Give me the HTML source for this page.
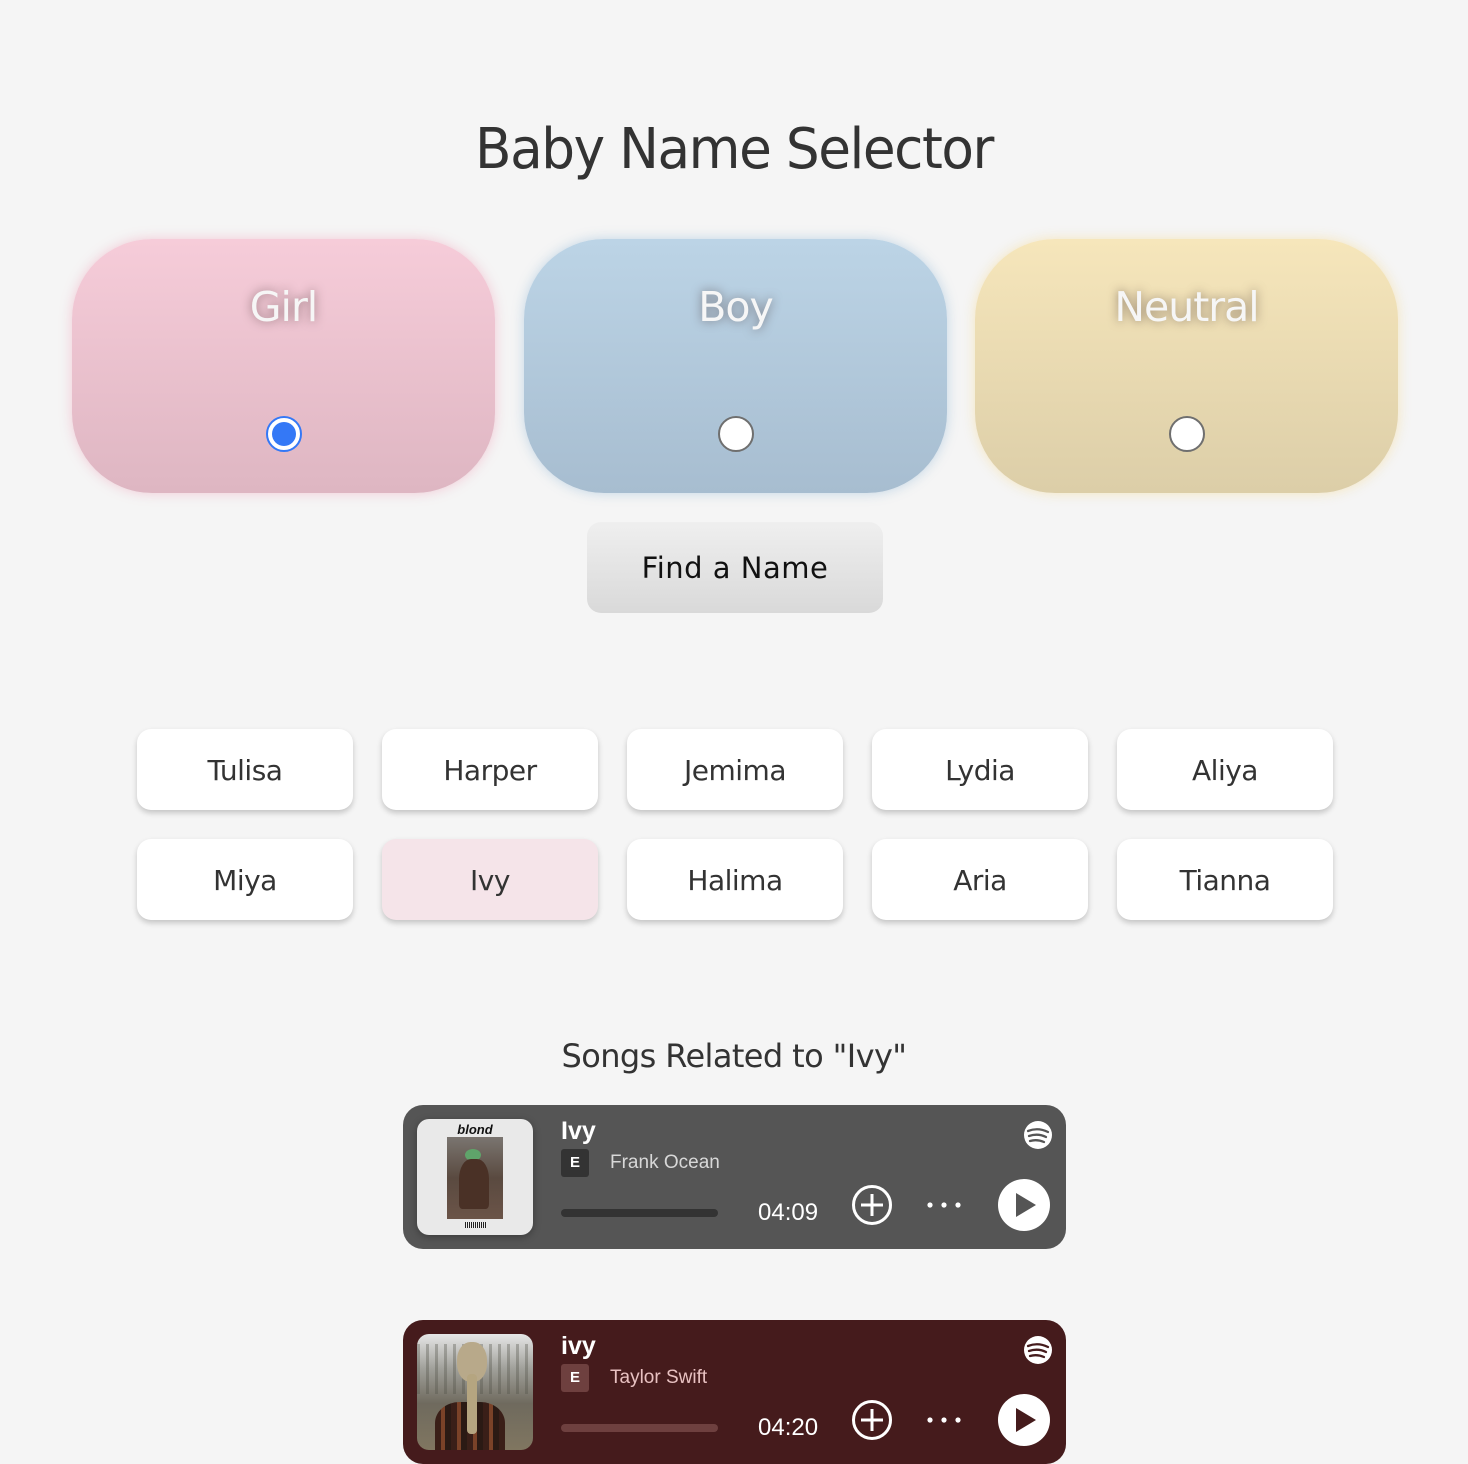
<!DOCTYPE html>
<html><head><meta charset="utf-8"><style>
*{margin:0;padding:0;box-sizing:border-box}
body{width:1468px;height:1450px;background:#f5f5f5;font-family:"DejaVu Sans","Liberation Sans",sans-serif;position:relative;overflow:hidden;color:#333}
.abs{position:absolute}
h1{position:absolute;left:0;width:1468px;top:117px;text-align:center;font-size:56px;font-weight:normal;color:#333;letter-spacing:-1.5px;font-family:"DejaVu Sans",sans-serif;transform:scaleX(.95)}
.card{position:absolute;top:239px;width:423px;height:254px;border-radius:80px}
.card .lbl{position:absolute;top:44px;width:100%;text-align:center;font-size:41px;color:#f6f6f6;text-shadow:0 0 10px rgba(60,40,40,.55);letter-spacing:-1px}
.radio{position:absolute;left:194px;top:177px;width:36px;height:36px;border-radius:50%;background:#fff;border:2px solid #6f6f6f}
.find{position:absolute;left:587px;top:522px;width:296px;height:91px;border-radius:14px;background:linear-gradient(#efefef,#d9d9d9);text-align:center;line-height:93px;font-size:29px;color:#111;letter-spacing:0.5px}
.nm{position:absolute;width:216px;height:81px;border-radius:14px;background:#fff;box-shadow:0 3px 6px rgba(0,0,0,.2);text-align:center;line-height:83px;font-size:28px;color:#333;letter-spacing:-.5px}
.h2{position:absolute;left:0;width:1468px;top:1037px;text-align:center;font-size:32px;color:#333;letter-spacing:-.6px}
.song{position:absolute;left:403px;width:663px;height:144px;border-radius:20px}
.art{position:absolute;left:14px;top:14px;width:116px;height:116px;border-radius:12px;overflow:hidden}
.t{position:absolute;left:158px;top:12px;font-size:25px;color:#fff;font-family:"Liberation Sans",sans-serif;font-weight:bold}
.e{position:absolute;left:158px;top:44px;width:28px;height:28px;border-radius:3px;color:#fff;font-size:15px;font-weight:bold;text-align:center;line-height:28px;font-family:"Liberation Sans",sans-serif}
.ar{position:absolute;left:207px;top:44px;line-height:28px;font-size:19px;font-family:"Liberation Sans",sans-serif}
.bar{position:absolute;left:158px;top:104px;width:157px;height:8px;border-radius:4px}
.tm{position:absolute;left:355px;top:94px;font-size:24px;color:#fff;font-family:"Liberation Sans",sans-serif}
</style></head><body>
<h1>Baby Name Selector</h1>
<div class="card" style="left:72px;background:linear-gradient(#f6ccd9,#deb6c2);box-shadow:0 0 12px rgba(240,190,205,.8)"><div class="lbl">Girl</div><div class="radio" style="border:2px solid #3478f6;background:#fff"><div style="position:absolute;left:4px;top:4px;width:24px;height:24px;border-radius:50%;background:#3478f6"></div></div></div>
<div class="card" style="left:524px;background:linear-gradient(#bcd4e6,#a7bdd0);box-shadow:0 0 12px rgba(180,205,225,.8)"><div class="lbl">Boy</div><div class="radio"></div></div>
<div class="card" style="left:975px;background:linear-gradient(#f6e6bb,#dccea8);box-shadow:0 0 12px rgba(245,225,175,.8)"><div class="lbl">Neutral</div><div class="radio"></div></div>
<div class="find">Find a Name</div>

<div class="nm" style="left:137px;top:729px">Tulisa</div>
<div class="nm" style="left:382px;top:729px">Harper</div>
<div class="nm" style="left:627px;top:729px">Jemima</div>
<div class="nm" style="left:872px;top:729px">Lydia</div>
<div class="nm" style="left:1117px;top:729px">Aliya</div>
<div class="nm" style="left:137px;top:839px">Miya</div>
<div class="nm" style="left:382px;top:839px;background:#f5e4e9">Ivy</div>
<div class="nm" style="left:627px;top:839px">Halima</div>
<div class="nm" style="left:872px;top:839px">Aria</div>
<div class="nm" style="left:1117px;top:839px">Tianna</div>

<div class="h2">Songs Related to "Ivy"</div>

<div class="song" style="top:1105px;background:#555">
 <div class="art" style="background:#e9e9e9;box-shadow:0 2px 8px rgba(0,0,0,.3)">
  <div class="abs" style="left:0;width:116px;top:3px;text-align:center;font:italic bold 13px 'Liberation Sans',sans-serif;color:#111">blond</div>
  <div class="abs" style="left:30px;top:18px;width:56px;height:82px;background:linear-gradient(#7a7570,#5a4a40 50%,#6b5448)"><div class="abs" style="left:18px;top:12px;width:16px;height:12px;border-radius:50%;background:#5fa46a"></div><div class="abs" style="left:12px;top:22px;width:30px;height:50px;border-radius:40% 40% 10% 10%;background:#4a3126"></div></div>
  <div class="abs" style="left:48px;top:103px;width:22px;height:6px;background:repeating-linear-gradient(90deg,#222 0 1px,#eee 1px 2px)"></div>
 </div>
 <div class="t">Ivy</div><div class="e" style="background:#333">E</div><div class="ar" style="color:#d8d8d8">Frank Ocean</div>
 <div class="bar" style="background:#333"></div><div class="tm">04:09</div>
 <svg class="abs" style="left:0;top:0" width="663" height="144">
  <circle cx="635" cy="30" r="14" fill="#fff"/><path d="M625 26q10-4 20 1M626 31q9-3 17 1M627 36q7-2 14 1" stroke="#555" stroke-width="2.3" fill="none" stroke-linecap="round"/>
  <circle cx="469" cy="100" r="18.5" fill="none" stroke="#fff" stroke-width="3"/><path d="M469 89v22M458 100h22" stroke="#fff" stroke-width="3"/>
  <circle cx="527" cy="100" r="2.6" fill="#fff"/><circle cx="541" cy="100" r="2.6" fill="#fff"/><circle cx="555" cy="100" r="2.6" fill="#fff"/>
  <circle cx="621" cy="100" r="26" fill="#fff"/><path d="M613 88v24l20-12z" fill="#555"/>
 </svg>
</div>

<div class="song" style="top:1320px;background:#451b1c">
 <div class="art" style="background:linear-gradient(#e6e6e6,#a0a09a 30%,#6f6a5e 60%,#807660)">
  <div class="abs" style="left:0;top:10px;width:116px;height:50px;background:repeating-linear-gradient(90deg,rgba(80,80,70,.35) 0 3px,transparent 3px 9px)"></div>
  <div class="abs" style="left:18px;top:68px;width:70px;height:60px;border-radius:35% 35% 0 0;background:repeating-linear-gradient(90deg,#3a1f18 0 6px,#7a4228 6px 10px,#2b1a14 10px 16px)"></div>
  <div class="abs" style="left:40px;top:8px;width:30px;height:40px;border-radius:45%;background:#b8a98a"></div>
  <div class="abs" style="left:50px;top:40px;width:10px;height:60px;border-radius:4px;background:#b5a580"></div>
 </div>
 <div class="t">ivy</div><div class="e" style="background:#6e403f">E</div><div class="ar" style="color:#e8c1c1">Taylor Swift</div>
 <div class="bar" style="background:#6e403f"></div><div class="tm">04:20</div>
 <svg class="abs" style="left:0;top:0" width="663" height="144">
  <circle cx="635" cy="30" r="14" fill="#fff"/><path d="M625 26q10-4 20 1M626 31q9-3 17 1M627 36q7-2 14 1" stroke="#451b1c" stroke-width="2.3" fill="none" stroke-linecap="round"/>
  <circle cx="469" cy="100" r="18.5" fill="none" stroke="#fff" stroke-width="3"/><path d="M469 89v22M458 100h22" stroke="#fff" stroke-width="3"/>
  <circle cx="527" cy="100" r="2.6" fill="#fff"/><circle cx="541" cy="100" r="2.6" fill="#fff"/><circle cx="555" cy="100" r="2.6" fill="#fff"/>
  <circle cx="621" cy="100" r="26" fill="#fff"/><path d="M613 88v24l20-12z" fill="#451b1c"/>
 </svg>
</div>
</body></html>
